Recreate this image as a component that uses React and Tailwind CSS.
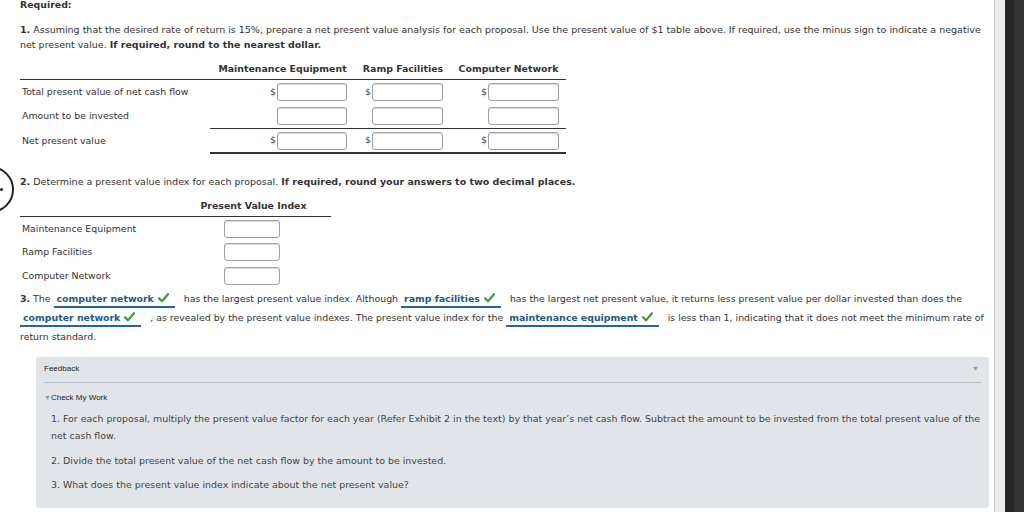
import React from "react";

const font = { fontFamily: '"DejaVu Sans", Verdana, sans-serif' };

function Box({ w = "w-[71px]" }) {
  return (
    <div className={`${w} h-[18px] rounded-[3px] border border-[#a0a0a0] bg-white shadow-[inset_0_1px_1px_rgba(0,0,0,0.15)]`} />
  );
}

function Cell({ dollar, w, pr }) {
  return (
    <div className={`flex items-center justify-end ${pr}`}>
      {dollar && <span className="mr-[1px] text-[#444]">$</span>}
      <Box w={w} />
    </div>
  );
}

function Check() {
  return (
    <svg width="11" height="10" viewBox="0 0 11 10" className="inline-block align-[-1px] ml-[4px]">
      <path d="M1 5.2 L4 8.3 L10 1.2" fill="none" stroke="#3f9b3f" strokeWidth="2.2" strokeLinecap="round" strokeLinejoin="round" />
    </svg>
  );
}

function Sel({ children }) {
  return (
    <span className="inline-block border-b-2 border-[#2a6496] pl-[3px] pr-[6px] leading-[15px] font-bold text-[#1f5a88]">
      {children}
      <Check />
    </span>
  );
}

export default function App() {
  return (
    <div className="flex w-[1024px] h-[512px] overflow-hidden bg-white text-[#333]" style={font}>
      <div className="relative w-[994px] shrink-0 overflow-hidden pl-[20px] pr-[8px] text-[9.4px]">
        <div className="absolute left-[-33px] top-[166px] w-[47px] h-[47px] rounded-full border-2 border-[#222]">
          <div className="absolute right-[9px] top-[20px] w-[3px] h-[3px] rounded-full bg-[#222]" />
        </div>

        <div className="mt-[-3px] leading-[16px] font-bold">Required:</div>

        <p className="mt-[9px] leading-[15px] whitespace-nowrap text-[9.5px]">
          <b>1.</b> Assuming that the desired rate of return is 15%, prepare a net present value analysis for each proposal. Use the present value of $1 table above. If required, use the minus sign to indicate a negative
          <br />
          net present value. <b>If required, round to the nearest dollar.</b>
        </p>

        <div className="mt-[9px] w-[546px]">
          <div className="grid grid-cols-[190px_145px_96px_115px] border-b border-[#333] pb-[2px] leading-[16px] font-bold">
            <div />
            <div className="text-center">Maintenance Equipment</div>
            <div className="text-center">Ramp Facilities</div>
            <div className="text-center">Computer Network</div>
          </div>
          <div className="grid grid-cols-[190px_145px_96px_115px] h-[24px] items-center">
            <div className="pl-[2px]">Total present value of net cash flow</div>
            <Cell dollar w="w-[70px]" pr="pr-[8px]" />
            <Cell dollar w="w-[71px]" pr="pr-[8px]" />
            <Cell dollar w="w-[71px]" pr="pr-[7px]" />
          </div>
          <div className="grid grid-cols-[190px_356px] h-[25px]">
            <div className="pl-[2px] flex items-center">Amount to be invested</div>
            <div className="grid grid-cols-[145px_96px_115px] items-center border-b border-[#333]">
              <Cell w="w-[70px]" pr="pr-[8px]" />
              <Cell w="w-[71px]" pr="pr-[8px]" />
              <Cell w="w-[71px]" pr="pr-[7px]" />
            </div>
          </div>
          <div className="grid grid-cols-[190px_356px] h-[25px]">
            <div className="pl-[2px] flex items-center">Net present value</div>
            <div className="grid grid-cols-[145px_96px_115px] items-center border-b-2 border-[#333]">
              <Cell dollar w="w-[70px]" pr="pr-[8px]" />
              <Cell dollar w="w-[71px]" pr="pr-[8px]" />
              <Cell dollar w="w-[71px]" pr="pr-[7px]" />
            </div>
          </div>
        </div>

        <p className="mt-[20px] leading-[16px] whitespace-nowrap text-[9.5px]">
          <b>2.</b> Determine a present value index for each proposal. <b>If required, round your answers to two decimal places.</b>
        </p>

        <div className="mt-[8px] w-[311px]">
          <div className="grid grid-cols-[156px_155px] border-b border-[#333] pb-[2px] leading-[16px] font-bold">
            <div />
            <div className="text-center">Present Value Index</div>
          </div>
          {["Maintenance Equipment", "Ramp Facilities", "Computer Network"].map((l) => (
            <div key={l} className="grid grid-cols-[156px_155px] h-[23.5px] items-center">
              <div className="pl-[2px]">{l}</div>
              <div className="flex justify-center pr-[3px]">
                <Box w="w-[56px]" />
              </div>
            </div>
          ))}
        </div>

        <p className="mt-[1px] leading-[19px] whitespace-nowrap">
          <b>3.</b> The <Sel>computer network</Sel>&nbsp;&nbsp; has the largest present value index. Although <Sel>ramp facilities</Sel>&nbsp;&nbsp; has the largest net present value, it returns less present value per dollar invested than does the
          <br />
          <Sel>computer network</Sel>&nbsp;&nbsp; , as revealed by the present value indexes. The present value index for the <Sel>maintenance equipment</Sel>&nbsp;&nbsp; is less than 1, indicating that it does not meet the minimum rate of
          <br />
          return standard.
        </p>

        <div className="mt-[11px] ml-[16px] mr-[-3px] h-[151px] rounded-[3px] bg-[#e1e5e9] px-[8px]">
          <div className="flex items-center justify-between border-b border-[#b9bfc5] h-[26px]" style={{ fontFamily: '"Liberation Sans", Arial, sans-serif' }}>
            <span className="text-[8px] text-[#222]">Feedback</span>
            <span className="text-[7px] text-[#999] mr-[2px]">▼</span>
          </div>
          <div className="mt-[10px] text-[8px] text-[#222] leading-[10px]" style={{ fontFamily: '"Liberation Sans", Arial, sans-serif' }}>
            <span className="text-[#999] text-[7px]">▼</span>Check My Work
          </div>
          <div className="pl-[7px] mt-[7px] text-[#444] leading-[17px] whitespace-nowrap text-[9.45px]">
            <p>
              1. For each proposal, multiply the present value factor for each year (Refer Exhibit 2 in the text) by that year’s net cash flow. Subtract the amount to be invested from the total present value of the
              <br />
              net cash flow.
            </p>
            <p className="mt-[8px]">2. Divide the total present value of the net cash flow by the amount to be invested.</p>
            <p className="mt-[7px]">3. What does the present value index indicate about the net present value?</p>
          </div>
        </div>
      </div>
      <div className="w-[11px] h-full border-l border-[#c9c9c9] bg-[#ececec]" />
      <div className="w-[9px] h-full bg-[#262626]" />
      <div className="w-[10px] h-full bg-[#343434]" />
    </div>
  );
}
